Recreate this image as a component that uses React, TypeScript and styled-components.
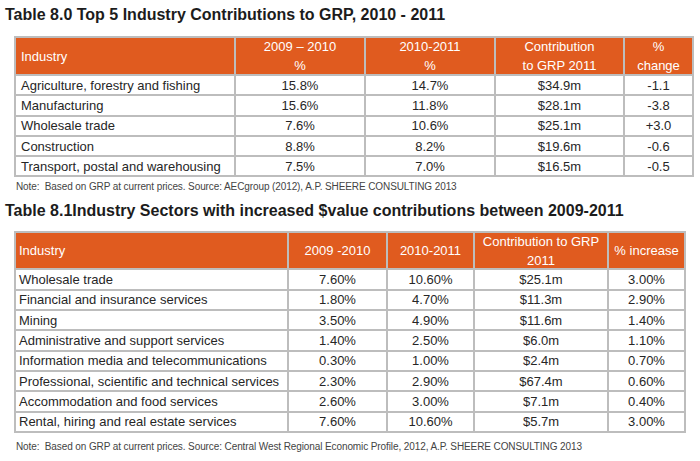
import React from "react";
import styled, { createGlobalStyle } from "styled-components";

const Global = createGlobalStyle`
  html, body { margin: 0; padding: 0; background: #ffffff; }
  body { font-family: "Liberation Sans", Arial, Helvetica, sans-serif; color: #222; }
`;

const Page = styled.div`
  width: 700px;
  height: 461px;
  padding: 5px 0 0 5px;
  box-sizing: border-box;
  display: flex;
  flex-direction: column;
`;

const Title = styled.h2<{ $top: number }>`
  margin: ${(p) => p.$top}px 0 0 0;
  font-size: 16px;
  line-height: 20px;
  font-weight: bold;
  color: #1c1c1c;
  white-space: nowrap;
`;

const Grid = styled.div<{ $cols: string; $top: number }>`
  margin: ${(p) => p.$top}px 0 0 9px;
  display: grid;
  grid-template-columns: ${(p) => p.$cols};
  border-top: 2px solid #bdbdbd;
  border-left: 2px solid #bdbdbd;
  width: max-content;
`;

const Cell = styled.div<{ $head?: boolean; $center?: boolean; $h: number; $pad: number }>`
  box-sizing: border-box;
  height: ${(p) => p.$h}px;
  border-right: 2px solid #bdbdbd;
  border-bottom: 2px solid #bdbdbd;
  background: ${(p) => (p.$head ? "#e05b1f" : "#ffffff")};
  color: ${(p) => (p.$head ? "#ffffff" : "#262626")};
  font-size: 13px;
  line-height: 19px;
  padding: 0 ${(p) => p.$pad}px;
  display: flex;
  align-items: center;
  justify-content: ${(p) => (p.$center ? "center" : "flex-start")};
  text-align: ${(p) => (p.$center ? "center" : "left")};
  white-space: nowrap;
`;

const HeadText = styled.span`
  white-space: normal;
`;

const Note = styled.p<{ $top: number }>`
  margin: ${(p) => p.$top}px 0 0 11px;
  font-size: 10px;
  line-height: 12px;
  color: #444;
  letter-spacing: -0.1px;
  white-space: nowrap;
`;

type TableProps = {
  cols: number[];
  headers: React.ReactNode[];
  rows: string[][];
  headH: number;
  rowH: number;
  pad: number;
  top: number;
};

function DataTable({ cols, headers, rows, headH, rowH, pad, top }: TableProps) {
  return (
    <Grid $cols={cols.map((c) => `${c}px`).join(" ")} $top={top}>
      {headers.map((h, i) => (
        <Cell key={`h${i}`} $head $center={i > 0} $h={headH} $pad={pad}>
          <HeadText>{h}</HeadText>
        </Cell>
      ))}
      {rows.map((r, ri) =>
        r.map((v, ci) => (
          <Cell key={`${ri}-${ci}`} $center={ci > 0} $h={rowH} $pad={pad}>
            {v}
          </Cell>
        ))
      )}
    </Grid>
  );
}

const rows1 = [
  ["Agriculture, forestry and fishing", "15.8%", "14.7%", "$34.9m", "-1.1"],
  ["Manufacturing", "15.6%", "11.8%", "$28.1m", "-3.8"],
  ["Wholesale trade", "7.6%", "10.6%", "$25.1m", "+3.0"],
  ["Construction", "8.8%", "8.2%", "$19.6m", "-0.6"],
  ["Transport, postal and warehousing", "7.5%", "7.0%", "$16.5m", "-0.5"],
];

const rows2 = [
  ["Wholesale trade", "7.60%", "10.60%", "$25.1m", "3.00%"],
  ["Financial and insurance services", "1.80%", "4.70%", "$11.3m", "2.90%"],
  ["Mining", "3.50%", "4.90%", "$11.6m", "1.40%"],
  ["Administrative and support services", "1.40%", "2.50%", "$6.0m", "1.10%"],
  ["Information media and telecommunications", "0.30%", "1.00%", "$2.4m", "0.70%"],
  ["Professional, scientific and technical services", "2.30%", "2.90%", "$67.4m", "0.60%"],
  ["Accommodation and food services", "2.60%", "3.00%", "$7.1m", "0.40%"],
  ["Rental, hiring and real estate services", "7.60%", "10.60%", "$5.7m", "3.00%"],
];

export default function App() {
  return (
    <Page>
      <Global />
      <Title $top={0}>Table 8.0 Top 5 Industry Contributions to GRP, 2010 - 2011</Title>
      <DataTable
        top={11}
        cols={[220, 130, 130, 129, 69]}
        headH={38}
        rowH={20.3}
        pad={5}
        headers={[
          "Industry",
          <>2009 – 2010<br />%</>,
          <>2010-2011<br />%</>,
          <>Contribution<br />to GRP 2011</>,
          <>%<br />change</>,
        ]}
        rows={rows1}
      />
      <Note $top={4}>
        Note:&nbsp; Based on GRP at current prices. Source: AECgroup (2012), A.P. SHEERE CONSULTING 2013
      </Note>
      <Title $top={8}>Table 8.1Industry Sectors with increased $value contributions between 2009-2011</Title>
      <DataTable
        top={10}
        cols={[273, 99, 87, 134, 77]}
        headH={37}
        rowH={20.3}
        pad={3}
        headers={["Industry", "2009 -2010", "2010-2011", "Contribution to GRP 2011", "% increase"]}
        rows={rows2}
      />
      <Note $top={8}>
        Note:&nbsp; Based on GRP at current prices. Source: Central West Regional Economic Profile, 2012, A.P. SHEERE CONSULTING 2013
      </Note>
    </Page>
  );
}
